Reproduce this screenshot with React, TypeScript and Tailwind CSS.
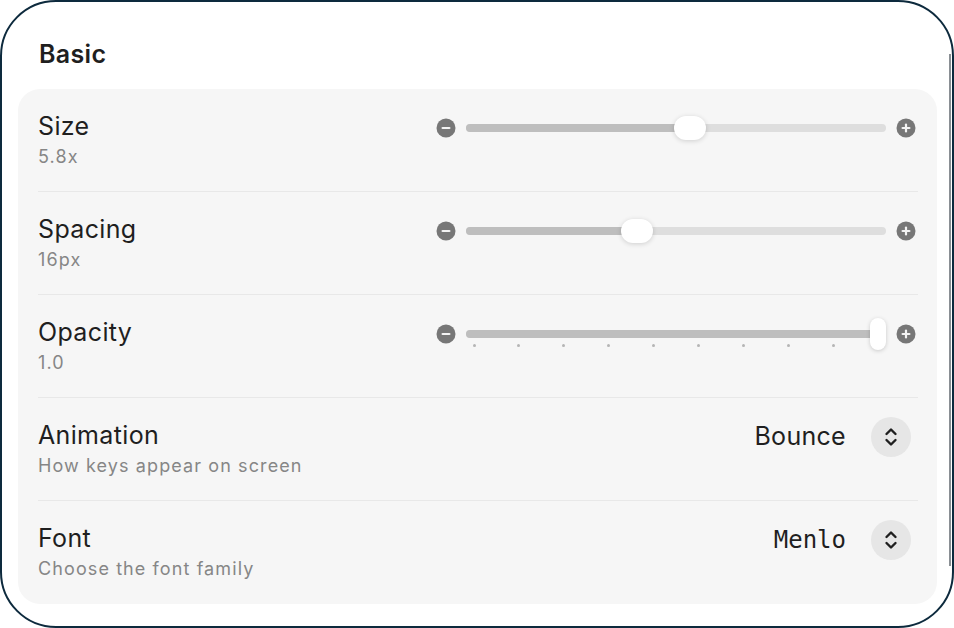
import React from "react";

const font = { fontFamily: "Inter, 'Noto Sans', sans-serif" };

function MinusIcon() {
  return (
    <svg width="20" height="20" viewBox="0 0 20 20" className="shrink-0">
      <circle cx="10" cy="10" r="9.5" fill="#777777" />
      <rect x="5.5" y="8.9" width="9" height="2.2" rx="1.1" fill="#f4f4f4" />
    </svg>
  );
}

function PlusIcon() {
  return (
    <svg width="20" height="20" viewBox="0 0 20 20" className="shrink-0">
      <circle cx="10" cy="10" r="9.5" fill="#777777" />
      <rect x="5.5" y="8.9" width="9" height="2.2" rx="1.1" fill="#f4f4f4" />
      <rect x="8.9" y="5.5" width="2.2" height="9" rx="1.1" fill="#f4f4f4" />
    </svg>
  );
}

function Slider({ pct, ticks }: { pct: number; ticks?: boolean }) {
  return (
    <div className="flex items-center gap-[10px] h-[30px] mt-[2px]">
      <MinusIcon />
      <div className="relative flex-1 h-[30px]">
        <div className="absolute left-0 right-0 top-[11px] h-[8px] rounded-full bg-[#dedede]" />
        <div
          className="absolute left-0 top-[11px] h-[8px] rounded-full bg-[#bebebe]"
          style={{ width: `${pct}%` }}
        />
        {ticks ? (
          <>
            {Array.from({ length: 10 }).map((_, i) => (
              <div
                key={i}
                className="absolute top-[25px] w-[3px] h-[3px] rounded-full bg-[#b5b5b5]"
                style={{ left: 6.5 + i * 44.9 }}
              />
            ))}
            <div className="absolute right-0 top-[-1px] w-[16px] h-[32px] rounded-full bg-white shadow-[0_1px_4px_rgba(0,0,0,0.18)]" />
          </>
        ) : (
          <div
            className="absolute top-[3px] w-[32px] h-[24px] rounded-full bg-white shadow-[0_1px_5px_rgba(0,0,0,0.16)]"
            style={{ left: `calc(${pct}% - 16px)` }}
          />
        )}
      </div>
      <PlusIcon />
    </div>
  );
}

function Stepper() {
  return (
    <div className="w-[40px] h-[40px] rounded-full bg-[#e6e6e6] flex items-center justify-center">
      <svg width="18" height="22" viewBox="0 0 18 22" fill="none" stroke="#1f1f1f" strokeWidth="2.4" strokeLinecap="round" strokeLinejoin="round">
        <path d="M4.5 8 L9 3.5 L13.5 8" />
        <path d="M4.5 14 L9 18.5 L13.5 14" />
      </svg>
    </div>
  );
}

function Row({
  title,
  sub,
  right,
  last,
}: {
  title: string;
  sub: string;
  right: React.ReactNode;
  last?: boolean;
}) {
  return (
    <div className={`flex items-start justify-between pt-[22px] h-[103px] ${last ? "" : "border-b border-[#e8e8e8]"}`}>
      <div className="flex flex-col">
        <div className="text-[25px] leading-[30px] tracking-[0.35px] text-[#1f1f1f]">{title}</div>
        <div className="mt-[5px] text-[18px] leading-[22px] tracking-[1.1px] text-[#868686]">{sub}</div>
      </div>
      {right}
    </div>
  );
}

export default function App() {
  return (
    <div className="w-[954px] h-[628px] bg-white" style={font}>
      <div className="relative w-full h-full rounded-[56px] border-2 border-[#0d2a3d] bg-white flex flex-col">
        <div className="pointer-events-none absolute right-[1px] top-[52px] bottom-[60px] w-[2px] bg-[#8a8f94]" />
        <div className="pl-[37px] pt-[36px] text-[25px] leading-[32px] tracking-[0.35px] font-semibold text-[#1f1f1f]">
          Basic
        </div>
        <div className="mt-[19px] ml-[16px] mr-[15px] rounded-[22px] bg-[#f6f6f6] pl-[20px] pr-[19px]">
          <Row
            title="Size"
            sub="5.8x"
            right={
              <div className="w-[480px] mr-[2px]">
                <Slider pct={53.3} />
              </div>
            }
          />
          <Row
            title="Spacing"
            sub="16px"
            right={
              <div className="w-[480px] mr-[2px]">
                <Slider pct={40.7} />
              </div>
            }
          />
          <Row
            title="Opacity"
            sub="1.0"
            right={
              <div className="w-[480px] mr-[2px]">
                <Slider pct={100} ticks />
              </div>
            }
          />
          <Row
            title="Animation"
            sub="How keys appear on screen"
            right={
              <div className="flex items-center gap-[25px] mt-[-3px] mr-[7px]">
                <span className="text-[25px] tracking-[0.3px] text-[#1f1f1f]">Bounce</span>
                <Stepper />
              </div>
            }
          />
          <Row
            title="Font"
            sub="Choose the font family"
            last
            right={
              <div className="flex items-center gap-[25px] mt-[-3px] mr-[7px]">
                <span className="text-[24px] text-[#1f1f1f]" style={{ fontFamily: "'DejaVu Sans Mono', monospace" }}>
                  Menlo
                </span>
                <Stepper />
              </div>
            }
          />
        </div>
      </div>
    </div>
  );
}
